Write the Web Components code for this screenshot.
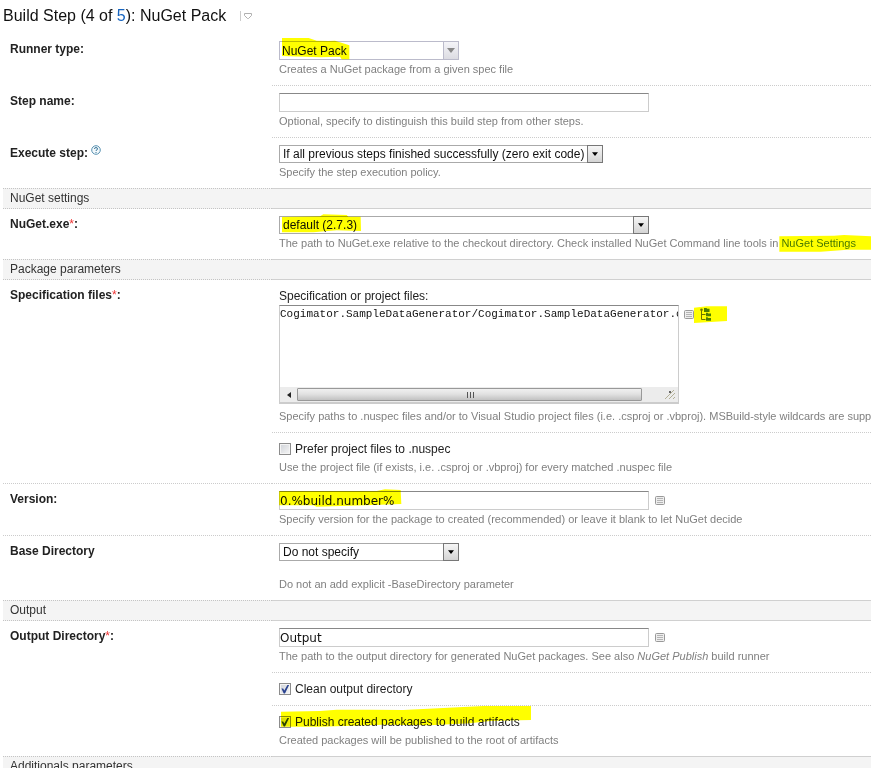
<!DOCTYPE html>
<html lang="en">
<head>
<meta charset="utf-8">
<title>Build Step: NuGet Pack</title>
<style>
html { background: #fff; scrollbar-width: none; }
body { margin: 0; font: 12px/18px "Liberation Sans", Arial, sans-serif; color: #222; }
</style>
</head>
<body>
<build-step-page></build-step-page>
<script>
function define(name, html, setup) {
  const template = document.createElement('template');
  template.innerHTML = html;
  customElements.define(name, class extends HTMLElement {
    constructor() {
      super();
      this.attachShadow({ mode: 'open' }).append(template.content.cloneNode(true));
    }
    connectedCallback() { if (setup) setup(this, this.shadowRoot); }
  });
}

/* Heading with the step count and a menu toggle */
define('step-title', `
<style>
:host { display: flex; align-items: center; gap: 13px; padding: 4px 0 6px; }
h1 { margin: 0; font-size: 16px; line-height: 24px; font-weight: normal; color: #111; white-space: nowrap; }
button { display: flex; margin: 0; padding: 0; border: 0; background: none; }
</style>
<h1><slot></slot></h1>
<button type="button" aria-label="Step menu"><svg width="14" height="12" viewBox="0 0 14 12" fill="none" stroke="#b0b0b0"><path d="M1.5 1v10" stroke="#ccc"/><path d="M5.500 3.500h7v2l-3 3h-1l-3-3z"/></svg></button>`);

/* Grey band that opens a group of settings */
define('section-band', `
<style>
:host { display: grid; grid-template-columns: 269px 1fr; background: #f4f4f4; }
h2, div { margin: 0; border-top: 1px dotted #c4c4c4; border-bottom: 1px dotted #c4c4c4; }
div { border-style: solid; border-color: #d0d0d0; border-width: 1px 0; }
h2 { height: 19px; padding-left: 7px; font-size: 12px; line-height: 19px; font-weight: normal; color: #333; }
</style>
<h2><slot></slot></h2><div></div>`);

/* Label column beside a field column */
define('setting-row', `
<style>
:host { display: grid; grid-template-columns: 269px minmax(0, 1fr); }
.name { padding: 7px 0 7px 7px; line-height: 16px; font-weight: bold; }
.field { padding: 7px 0 7px 7px; white-space: nowrap; }
:host([rule]) .field, :host([rule=full]) .name { border-bottom: 1px dotted #ccc; }
</style>
<div class="name"><slot name="name"></slot></div><div class="field"><slot></slot></div>`);

define('field-note', `
<style>
:host { display: block; color: #808080; font-size: 11px; line-height: 18px; }
:host([spaced]) { padding-top: 14px; }
:host([close]) { padding-top: 3px; }
</style><slot></slot>`);

define('required-mark', `<style>:host { color: #e33; font-weight: normal; }</style>*`);

/* Frame around a select that draws its arrow button */
define('drop-box', `
<style>
:host { display: flex; position: relative; height: 18px; width: var(--w); max-width: 100%; }
:host([soft]) { height: 19px; }
span { position: absolute; right: 0; top: 0; bottom: 0; width: 16px; box-sizing: border-box; display: flex; align-items: center; justify-content: center; border: 1px solid #777; color: #000; background: linear-gradient(#f6f6f6, #d4d4d4); pointer-events: none; }
:host([soft]) span { border-color: #bbbbcb; color: #888; background: linear-gradient(#f4f4f8, #dcdce2); }
</style>
<slot></slot><span><svg width="8" height="5" viewBox="0 0 8 5"><path d="M0 0h8L4 5z" fill="currentColor"/></svg></span>`,
(host, root) => {
  const svg = root.querySelector('svg');
  if (!host.hasAttribute('soft')) { svg.setAttribute('width', 6); svg.setAttribute('height', 4); }
});

define('field-line', `
<style>:host { display: flex; align-items: center; gap: 6px; position: relative; } :host([top]) { align-items: flex-start; gap: 5px; }</style><slot></slot>`);

define('param-button', `
<style>
:host { display: block; } :host([top]) { padding-top: 5px; }
button { display: block; padding: 0; border: 0; background: none; }
svg { display: block; }
</style>
<button type="button" aria-label="Insert parameter"><svg width="10" height="9" viewBox="0 0 10 9" fill="none"><rect x=".5" y=".5" width="9" height="8" rx="1" fill="#eee" stroke="#999"/><path d="M2 2.5h6M2 4.5h6M2 6.5h6" stroke="#b4b4b4"/></svg></button>`);

define('tree-button', `
<style>
:host { display: block; position: relative; padding-top: 3px; }
button { display: block; padding: 0; border: 0; background: none; }
svg { display: block; }
</style>
<button type="button" aria-label="Browse files"><svg width="13" height="13" viewBox="0 0 13 13"><path d="M2.5 3v8.500M2.500 6.500h4M2.500 11.500h4" stroke="#6b7480" fill="none"/><circle cx="2.500" cy="1.800" r="1.300" fill="#6b7480"/><path d="M5 0h2.500l.7.800H10.500V4H5zM7 4.700h1.500l.7.800H12V8.300H7zM7 9.200h1.500l.7.800H12V12.800H7z" fill="#4d7f66"/></svg></button><slot></slot>`);

/* Text area frame with a horizontal scroll bar strip */
define('code-area', `
<style>
:host { display: flex; flex-direction: column; width: 400px; height: 99px; box-sizing: border-box; border: 1px solid #ccc; border-top-color: #888; border-bottom-width: 2px; }
.bar { display: flex; align-items: stretch; height: 15px; background: #ececec; }
.arrow { width: 17px; display: grid; place-items: center; }
.thumb { flex: 1; display: grid; place-items: center; margin: 1px 0; border: 1px solid #999; border-radius: 1px; background: linear-gradient(#f0f0f0, #e2e2e2 45%, #c2c2c2); }
.end { width: 36px; display: flex; justify-content: flex-end; align-items: center; padding-right: 2px; box-sizing: border-box; }
</style>
<slot></slot>
<div class="bar"><div class="arrow"><svg width="4" height="6"><path d="M4 0v6L0 3z" fill="#222"/></svg></div><div class="thumb"><svg width="8" height="6" stroke="#555"><path d="M1.500 0v6M4.500 0v6M7.500 0v6"/></svg></div><div class="end"><svg width="12" height="11" fill="none"><path d="M1 10l9-9M5 10l6-6M9 10l2-2" stroke="#b3b096"/><path d="M5 2h2v2H5z" fill="#666"/></svg></div></div>`);

define('tick-line', `
<style>:host { display: flex; align-items: center; gap: 4px; position: relative; height: 18px; color: #222; }</style><slot></slot>`);

define('help-link', `
<style>:host { display: inline-block; vertical-align: top; } a, svg { display: block; }</style>
<a href="#help" aria-label="Help"><svg width="10" height="10" viewBox="0 0 10 10" fill="none" stroke="#5a93b3"><circle cx="5" cy="5" r="4.300" fill="#f2f8fb"/><path d="M3.500 4Q3.500 2.500 5 2.500T6.500 4Q6.500 4.800 5 5.500V6M5 7v1" stroke="#39779b"/></svg></a>`);

/* Highlighter stroke laid over its container; points are in thirds of a pixel */
define('marker-stroke', `
<style>:host { position: absolute; left: 0; top: 0; mix-blend-mode: multiply; pointer-events: none; } svg { display: block; overflow: visible; }</style>
<svg width="100" height="20" viewBox="0 0 300 60"><polygon fill="#ff0"/></svg>`,
(host, root) => root.querySelector('polygon').setAttribute('points', host.getAttribute('points')));

define('build-step-page', `
<style>
:host { display: block; padding: 0 1px 0 3px; }
form { overflow: hidden; }
a { color: #1564c0; text-decoration: none; }
input, select, textarea { box-sizing: border-box; margin: 0; border-radius: 0; color: #111; background: #fff; outline: none; }
select { appearance: none; width: 100%; height: 100%; padding: 0 18px 0 3px; border: 1px solid #aaa; font: 12px "Liberation Sans", Arial, sans-serif; }
drop-box[soft] select { padding-left: 2px; border-color: #bbbbcb; }
input[type=text] { width: 370px; height: 19px; padding: 0; border: 1px solid #ccc; border-top-color: #888; font: 12px "DejaVu Sans", Verdana, sans-serif; }
textarea { display: block; flex: 1; min-height: 0; width: 100%; padding: 2px 0; border: 0; resize: none; overflow: hidden; white-space: pre; font: 11px/13px "Liberation Mono", "Courier New", monospace; }
input[type=checkbox] { appearance: none; display: grid; place-items: center; width: 12px; height: 12px; border: 1px solid #8c8c8c; background: linear-gradient(135deg, #cfd2d8, #f6f6f6); box-shadow: inset 0 0 0 1px #f4f4f4; }
input[type=checkbox]:checked::after { content: ""; width: 9px; height: 9px; background: #2a4390; clip-path: polygon(10% 45%, 30% 45%, 42% 68%, 80% 0, 98% 0, 50% 100%, 36% 100%); }
.tool { display: inline-block; position: relative; }
.tool a { color: #4a7ac0; }
.lead { display: block; }
</style>
<form>
<step-title>Build Step (4 of <a href="#steps">5</a>): NuGet Pack</step-title>
<setting-row rule>
  <label slot="name" for="runner">Runner type:</label>
  <drop-box soft style="--w:180px"><select id="runner"><option>NuGet Pack</option></select><marker-stroke points="9,-9 89,-9 113,-1 148,0 168,-1 211,13 211,55 188,55 183,47 123,49 9,45"></marker-stroke></drop-box>
  <field-note>Creates a NuGet package from a given spec file</field-note>
</setting-row>
<setting-row rule>
  <label slot="name" for="step">Step name:</label>
  <field-line><input type="text" id="step"></field-line>
  <field-note>Optional, specify to distinguish this build step from other steps.</field-note>
</setting-row>
<setting-row>
  <span slot="name"><label for="policy">Execute step:</label> <help-link></help-link></span>
  <drop-box style="--w:324px"><select id="policy"><option>If all previous steps finished successfully (zero exit code)</option></select></drop-box>
  <field-note>Specify the step execution policy.</field-note>
</setting-row>
<section-band>NuGet settings</section-band>
<setting-row>
  <label slot="name" for="exe">NuGet.exe<required-mark></required-mark>:</label>
  <drop-box style="--w:370px"><select id="exe"><option>default (2.7.3)</option></select><marker-stroke points="9,3 123,1 133,-5 203,-3 208,2 245,2 246,45 173,43 103,49 9,49"></marker-stroke></drop-box>
  <field-note>The path to NuGet.exe relative to the checkout directory. Check installed NuGet Command line tools in <span class="tool"><a href="#nuget">NuGet Settings</a><marker-stroke points="-5,7 159,5 189,3 285,7 285,47 199,47 119,53 -5,53"></marker-stroke></span></field-note>
</setting-row>
<section-band>Package parameters</section-band>
<setting-row rule>
  <label slot="name" for="spec">Specification files<required-mark></required-mark>:</label>
  <label class="lead" for="spec">Specification or project files:</label>
  <field-line top><code-area><textarea id="spec" wrap="off">Cogimator.SampleDataGenerator/Cogimator.SampleDataGenerator.csproj</textarea></code-area><param-button top></param-button><tree-button><marker-stroke points="-15,8 23,4 84,4 84,48 -15,54"></marker-stroke></tree-button></field-line>
  <field-note close>Specify paths to .nuspec files and/or to Visual Studio project files (i.e. .csproj or .vbproj). MSBuild-style wildcards are supported.</field-note>
</setting-row>
<setting-row rule="full">
  <tick-line><input type="checkbox" id="prefer"><label for="prefer">Prefer project files to .nuspec</label></tick-line>
  <field-note>Use the project file (if exists, i.e. .csproj or .vbproj) for every matched .nuspec file</field-note>
</setting-row>
<setting-row rule="full">
  <label slot="name" for="version">Version:</label>
  <field-line><input type="text" id="version" value="0.%build.number%"><param-button></param-button><marker-stroke points="0,0 293,0 318,-5 365,-3 367,39 303,41 113,47 103,43 0,43"></marker-stroke></field-line>
  <field-note>Specify version for the package to created (recommended) or leave it blank to let NuGet decide</field-note>
</setting-row>
<setting-row>
  <label slot="name" for="base">Base Directory</label>
  <drop-box style="--w:180px"><select id="base"><option>Do not specify</option></select></drop-box>
  <field-note spaced>Do not an add explicit -BaseDirectory parameter</field-note>
</setting-row>
<section-band>Output</section-band>
<setting-row rule>
  <label slot="name" for="out">Output Directory<required-mark></required-mark>:</label>
  <field-line><input type="text" id="out" value="Output"><param-button></param-button></field-line>
  <field-note>The path to the output directory for generated NuGet packages. See also <i>NuGet Publish</i> build runner</field-note>
</setting-row>
<setting-row rule>
  <tick-line><input type="checkbox" id="clean" checked><label for="clean">Clean output directory</label></tick-line>
</setting-row>
<setting-row>
  <tick-line><input type="checkbox" id="publish" checked><label for="publish">Publish created packages to build artifacts</label><marker-stroke points="6,-4 123,-6 173,-10 273,-10 373,-9 493,-15 613,-21 756,-21 756,21 633,24 573,31 453,37 313,35 123,41 6,41"></marker-stroke></tick-line>
  <field-note>Created packages will be published to the root of artifacts</field-note>
</setting-row>
<section-band>Additionals parameters</section-band>
</form>`);
</script>
</body>
</html>
